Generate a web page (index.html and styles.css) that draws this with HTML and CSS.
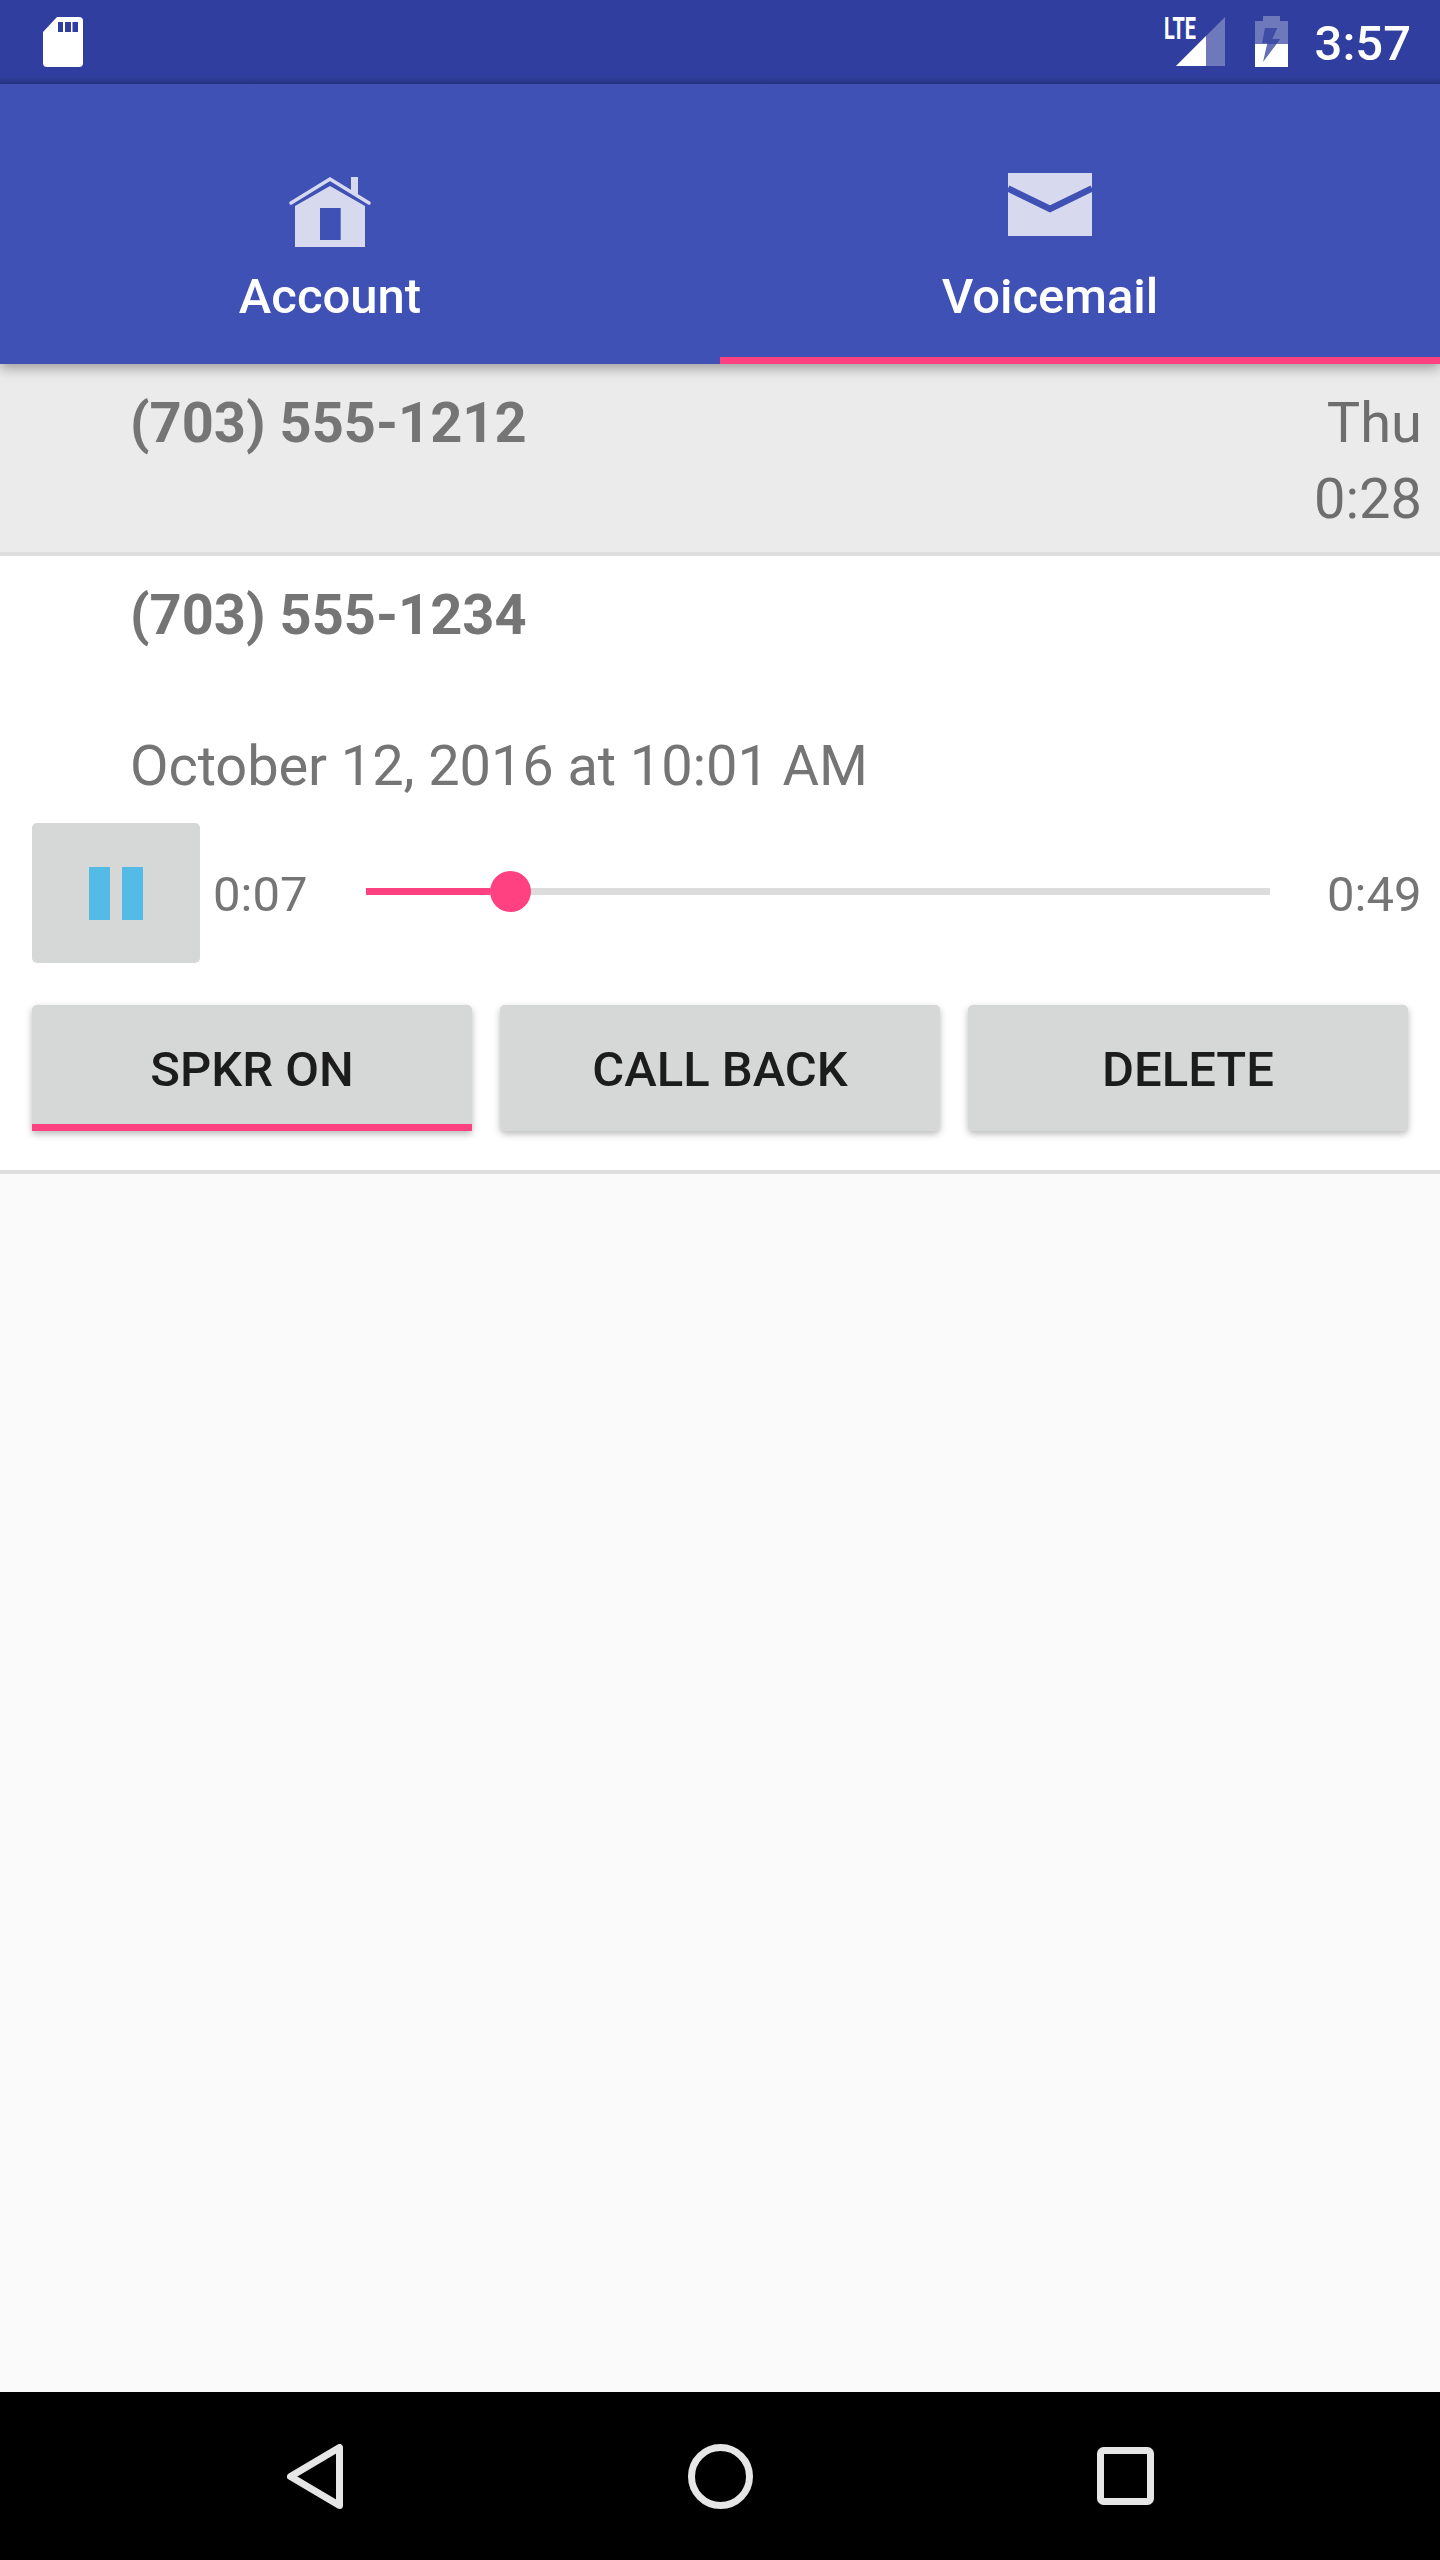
FILE: index.html
```html
<!DOCTYPE html>
<html lang="en">
<head>
    <meta charset="UTF-8">
    <meta name="viewport" content="width=device-width, initial-scale=1.0">
    <title>Voicemail</title>
    <link rel="stylesheet" href="styles.css">
</head>
<body>
    <div class="phone">
        <div class="status-bar">
            <svg class="sd-icon" width="40" height="50" viewBox="0 0 40 50">
                <path fill="#fff" d="M14 0H36a4 4 0 0 1 4 4V46a4 4 0 0 1-4 4H4a4 4 0 0 1-4-4V15Z"/>
                <path fill="#303f9f" d="M15 5h5v10h-5zM22 5h6v10h-6zM29.500 5h5.500v10h-5.500z"/>
            </svg>
            <div class="status-right">
                <svg class="signal-icon" width="61" height="60" viewBox="0 -10 61 60">
                    <path fill="#fff" fill-opacity="0.3" d="M61 0V49H12Z"/>
                    <path fill="#fff" d="M42 19V49H12Z"/>
                    <text class="lte" x="0" y="22" textLength="32" lengthAdjust="spacingAndGlyphs">LTE</text>
                </svg>
                <svg class="battery-icon" width="33" height="51" viewBox="0 0 33 51">
                    <path fill="#fff" fill-opacity="0.3" d="M8 0H25V5H33V28H0V5H8Z"/>
                    <path fill="#fff" d="M0 28H33V51H0Z"/>
                    <path fill="#303f9f" fill-opacity="0.75" d="M10 12H22.300L17.300 23H25.300L8 46L12.300 27.300H7Z"/>
                </svg>
                <span class="clock">3:57</span>
            </div>
        </div>

        <div class="tabs">
            <div class="tab">
                <svg class="tab-icon" width="84" height="80" viewBox="0 0 84 80">
                    <path fill="#d7daef" fill-rule="evenodd" d="M7 38L42 18L77 38V79H7ZM32 40V72H52.700V40Z"/>
                    <path fill="#d7daef" d="M63 9H70V27L63 23Z"/>
                    <path fill="none" stroke="#d7daef" stroke-width="3.500" stroke-linecap="round" d="M3 35L42 11L81 35"/>
                </svg>
                <span>Account</span>
            </div>
            <div class="tab tab-active">
                <svg class="tab-icon" width="84" height="80" viewBox="0 0 84 80">
                    <path fill="#d7daef" d="M0 5H84V68H0Z"/>
                    <path fill="none" stroke="#3f51b5" stroke-width="6.500" d="M0 20.500L42 41L84 20.500"/>
                </svg>
                <span>Voicemail</span>
            </div>
        </div>

        <div class="call-row call-row-read">
            <div class="call-top">
                <span class="number">(703) 555-1212</span>
                <span class="call-meta">Thu<br>0:28</span>
            </div>
        </div>

        <div class="call-row call-row-open">
            <div class="number">(703) 555-1234</div>
            <div class="call-date">October 12, 2016 at 10:01 AM</div>
            <div class="player">
                <div class="pause-btn">
                    <span class="pause-bar"></span>
                    <span class="pause-bar"></span>
                </div>
                <span class="time">0:07</span>
                <div class="seekbar">
                    <div class="seek-done" style="width: 124px"></div>
                    <div class="seek-thumb"></div>
                </div>
                <span class="time time-end">0:49</span>
            </div>
            <div class="actions">
                <button class="action action-on">SPKR ON</button>
                <button class="action">CALL BACK</button>
                <button class="action">DELETE</button>
            </div>
        </div>

        <div class="empty"></div>

        <div class="nav-bar">
            <svg width="56" height="65" viewBox="0 0 56 65">
                <path fill="none" stroke="#e6e6e6" stroke-width="7" stroke-linejoin="round" d="M52.500 3.500V61.500L3.500 32.500Z"/>
            </svg>
            <svg width="65" height="65" viewBox="0 0 65 65">
                <circle cx="32.500" cy="32.500" r="29" fill="none" stroke="#e6e6e6" stroke-width="7"/>
            </svg>
            <svg width="57" height="58" viewBox="0 0 57 58">
                <rect x="3.500" y="3.500" width="50" height="51" rx="3" fill="none" stroke="#e6e6e6" stroke-width="7"/>
            </svg>
        </div>
    </div>
</body>
</html>
```

FILE: styles.css
```css
* {
    box-sizing: border-box;
}
body {
    margin: 0;
    font-family: Roboto, "Noto Sans", sans-serif;
    background-color: #fafafa;
}
.phone {
    width: 1440px;
    height: 2560px;
    display: flex;
    flex-direction: column;
    overflow: hidden;
}
.status-bar {
    height: 84px;
    flex-shrink: 0;
    padding: 17px 29px 0 43px;
    display: flex;
    justify-content: space-between;
    align-items: flex-start;
    background: linear-gradient(#303f9f 92%, #2a3788);
}
.status-right {
    display: flex;
    align-items: flex-start;
}
.signal-icon {
    margin-top: -10px;
    margin-right: 30px;
}
.lte {
    font-family: Roboto, sans-serif;
    font-size: 31px;
    font-weight: 700;
    fill: #fff;
}
.battery-icon {
    margin-top: -1px;
    margin-right: 27px;
}
.clock {
    color: #fff;
    font-size: 49px;
    font-weight: 500;
    line-height: 56px;
    margin-top: -1px;
}
.tabs {
    position: relative;
    z-index: 1;
    height: 280px;
    flex-shrink: 0;
    display: flex;
    background-color: #3f51b5;
    box-shadow: 0 4px 12px rgba(0, 0, 0, 0.35);
}
.tab {
    flex: 1;
    padding: 84px 60px 0 0;
    display: flex;
    flex-direction: column;
    align-items: center;
    color: #fff;
    font-size: 49px;
    font-weight: 500;
    line-height: 56px;
}
.tab-active {
    border-bottom: 7px solid #ff4081;
}
.tab-icon {
    margin-bottom: 21px;
}
.call-row {
    color: #757575;
    border-bottom: 4px solid #dedede;
}
.call-row-read {
    height: 192px;
    padding: 27px 18px 0 130px;
    background-color: #ebebeb;
}
.call-top {
    display: flex;
    justify-content: space-between;
    align-items: flex-start;
}
.number {
    font-size: 56px;
    font-weight: 700;
    line-height: 64px;
}
.call-meta {
    margin-top: -6px;
    color: #6e6e6e;
    font-size: 56px;
    line-height: 76px;
    text-align: right;
}
.call-row-open {
    height: 618px;
    padding-top: 27px;
    background-color: #fff;
}
.call-row-open .number {
    padding-left: 130px;
}
.call-date {
    margin-top: 87px;
    padding-left: 130px;
    font-size: 56px;
    letter-spacing: -0.1px;
    line-height: 64px;
}
.player {
    margin-top: 25px;
    padding: 0 19px 0 32px;
    display: flex;
    align-items: center;
}
.pause-btn {
    width: 168px;
    height: 140px;
    flex-shrink: 0;
    display: flex;
    justify-content: center;
    align-items: center;
    gap: 12px;
    background-color: #d6d8d8;
    border-radius: 5px;
}
.pause-bar {
    width: 21px;
    height: 53px;
    background-color: #54bbe6;
}
.time {
    margin: 4px 0 0 13px;
    width: 94px;
    flex-shrink: 0;
    font-size: 49px;
    line-height: 56px;
}
.time-end {
    margin-left: 57px;
}
.seekbar {
    position: relative;
    margin: -4px 0 0 59px;
    width: 904px;
    height: 7px;
    flex-shrink: 0;
    background-color: #dcdcdc;
}
.seek-done {
    height: 100%;
    background-color: #ff4081;
}
.seek-thumb {
    position: absolute;
    left: 124px;
    top: -17px;
    width: 41px;
    height: 41px;
    border-radius: 50%;
    background-color: #ff4081;
}
.actions {
    margin-top: 42px;
    padding: 0 32px;
    display: flex;
    gap: 28px;
}
.action {
    width: 440px;
    height: 126px;
    padding: 3px 0 0;
    border: none;
    border-radius: 5px;
    background-color: #d6d8d8;
    color: #1c1c1c;
    font-family: Roboto, sans-serif;
    font-size: 49px;
    font-weight: 500;
    box-shadow: 0 3px 7px rgba(0, 0, 0, 0.28);
}
.action-on {
    padding-top: 10px;
    border-bottom: 7px solid #ff4081;
    border-radius: 5px 5px 0 0;
}
.empty {
    flex: 1;
    background-color: #fafafa;
}
.nav-bar {
    height: 168px;
    flex-shrink: 0;
    padding: 0 286px 0 287px;
    display: flex;
    justify-content: space-between;
    align-items: center;
    background-color: #000;
}
```
